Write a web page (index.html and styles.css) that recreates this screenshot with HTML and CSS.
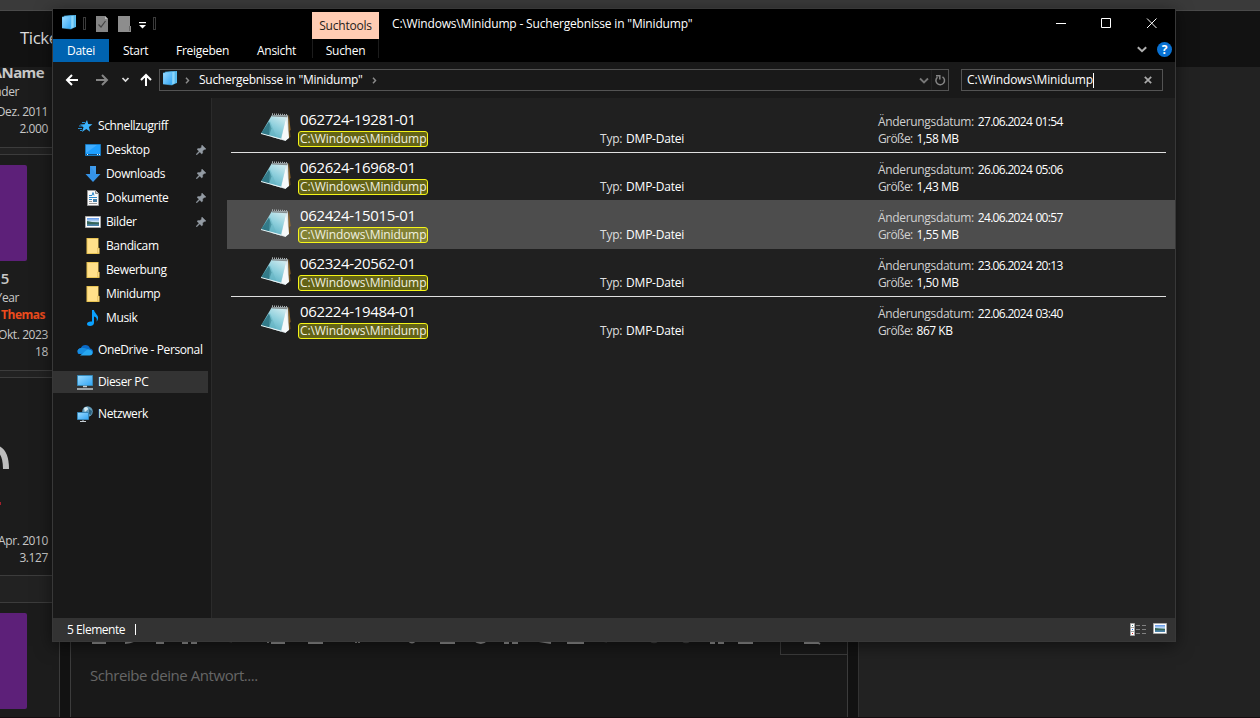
FILE: index.html
```html
<!DOCTYPE html>
<html lang="de">
<head>
<meta charset="utf-8">
<title>C:\Windows\Minidump - Suchergebnisse</title>
<link rel="stylesheet" href="styles.css">
</head>
<body>
<svg class="defs" width="0" height="0">
  <defs>
    <linearGradient id="blue" x1="0" y1="0" x2="1" y2="1"><stop offset="0" stop-color="#9fdcff"/><stop offset="1" stop-color="#2ea4f5"/></linearGradient>
    <linearGradient id="page" x1="0.8" y1="0" x2="0.2" y2="1"><stop offset="0" stop-color="#d2ecf0"/><stop offset=".45" stop-color="#8fd0dd"/><stop offset="1" stop-color="#4ea7bb"/></linearGradient>
    <linearGradient id="sky" x1="0" y1="0" x2="0" y2="1"><stop offset="0" stop-color="#5e96ea"/><stop offset=".45" stop-color="#cde3f5"/><stop offset=".6" stop-color="#3f6f68"/><stop offset="1" stop-color="#4d86b8"/></linearGradient>
    <symbol id="results" viewBox="0 0 14 15"><path d="M4 1l10-1v12l-3 1z" fill="#5bbdf0"/><path d="M2 1l10-.6v12L9 14z" fill="#8bd5fa" stroke="#3ba6e2" stroke-width=".5"/><path d="M0 2l9-.8V14l-9-1z" fill="url(#blue)" stroke="#55baf0" stroke-width=".5"/></symbol>
    <symbol id="pin" viewBox="0 0 10 10"><path d="M6 0l4 4-1.200.5-.6-.1-1.600 1.700.1 2L5.700 9 3.800 7 .6 10 0 9.400 3 6.200 1 4.300l1-.8 2 .1L5.700 2 5.500 1z" fill="#939ba3" stroke="#939ba3" stroke-width=".4"/></symbol>
    <symbol id="folder" viewBox="0 0 13 16"><path d="M0 0h12v10h1v6H0z" fill="#e9c453"/><path d="M1 1h10.500v14H1z" fill="#ffe08a"/><path d="M11 10h1.500v5H11z" fill="#ffe8a6" stroke="#d8ae3d" stroke-width=".5"/></symbol>
    <symbol id="notepad" viewBox="0 0 32 31"><path d="M28.500 4l2 22-2.500 1.500-1-22z" fill="#71501f"/><path d="M29 4l1.500 15-1 1z" fill="#b47a28"/><path d="M12 4l16 .6.800 22L25.500 30 12 26z" fill="#dce6ea"/><path d="M26 7l3 20-3.500 2.500-4-2z" fill="#f6f9fa"/><path d="M12 4l14.500 1L21 28 1 22.500z" fill="url(#page)"/><path d="M9 10.500l2.500 7L9 25l-8-2.500z" fill="#286f7d" opacity=".85"/><path d="M10 10l6 15-7-.5z" fill="#65b3c2" opacity=".5"/><path d="M1 22.500l20 5.500" stroke="#e8f4f6" stroke-width="1"/><path d="M12 3.300l16 .8" stroke="#a8aeb0" stroke-width="2" stroke-dasharray="1 1"/><path d="M12 4.800l15.500.7" stroke="#858e90" stroke-width="1.500"/></symbol>
    <symbol id="picture" viewBox="0 0 16 12"><path d="M.5.500h15v11H.5z" fill="#fff" stroke="#a9a9a9"/><path d="M2 2h12v8H2z" fill="url(#sky)"/><path d="M2 5l5 1 7 1v1H2z" fill="#36665b"/></symbol>
  </defs>
</svg>

<div class="desktop">
  <div class="browserbar"></div>
  <div class="pagehead"><span>Ticke</span></div>
  <div class="columns">
    <div class="posts">
      <section class="post p1"><div class="uname">AName</div><div class="utitle t1">nder</div><div class="meta">Dez. 2011</div><div class="meta">2.000</div></section>
      <section class="post p2"><div class="avatar"></div><div class="five">5</div><div class="utitle">Year</div><div class="themas">Themas</div><div class="meta">Okt. 2023</div><div class="meta">18</div></section>
      <section class="post p3"><svg class="ring" width="10" height="24" viewBox="0 0 10 24"><path d="M-4 2C3 4 6 11 6 23" fill="none" stroke="#bdbdbd" stroke-width="6"/></svg><div class="reddot"></div><div class="meta">Apr. 2010</div><div class="meta">3.127</div></section>
      <section class="post p4"><div class="avatar"></div></section>
    </div>
    <div class="editorwrap">
      <div class="editor">
        <svg class="tools" width="776" height="16" viewBox="0 0 776 16"><g fill="none" stroke="#969696" stroke-width="1.800"><path d="M22 3h14M55 3q5 0 9-2M86 3h8M112 3h6m3 0h6M198 0v3m3 0h14M238 3h15M286 0v3m3-3v3M338 0q4 5 8 0M370 3h15M404 0q7 6 13 0M434 3h5m3 0h6M469 1l12 2M497 3h17M640 3h5m3 0h6M668 3h15M734 3h14m-4-3l6 4"/></g><g fill="none" stroke="#414141" stroke-width="1.500"><path d="M158 1l4 1M533 1l4 1M579 0q5 5 10 0M611 0q5 5 10 0"/></g></svg>
        <div class="preview"></div>
        <p>Schreibe deine Antwort....</p>
      </div>
    </div>
    <div class="aside"></div>
  </div>
</div>

<main class="window">
  <header class="ribbon">
    <div class="quick">
      <svg class="qicon" width="14" height="15"><use href="#results"/></svg><i class="grip g1"></i>
      <svg class="check" width="12" height="16" viewBox="0 0 12 16"><path d="M0 0h9l3 3v13H0z" fill="#858585"/><path d="M9 0v3h3" fill="#bbb"/><path d="M2.500 8.500l2.500 2.500 4.500-6" fill="none" stroke="#444" stroke-width="1.200"/></svg>
      <svg class="newf" width="13" height="16" viewBox="0 0 13 16"><path d="M0 0h12v10h1v6H0z" fill="#8d8d8d"/><path d="M11 10h1v5h-1z" fill="#666"/></svg>
      <svg class="more" width="7" height="7" viewBox="0 0 7 7"><path d="M0 .6h7" stroke="#fff" stroke-width="1.200"/><path d="M0 3h7L3.500 6.500z" fill="#fff"/></svg><i class="grip"></i>
    </div>
    <nav class="tabs"><span class="datei">Datei</span><span class="start">Start</span><span class="frei">Freigeben</span><span class="ans">Ansicht</span></nav>
    <div class="context"><b>Suchtools</b><span>Suchen</span></div>
    <div class="title">C:\Windows\Minidump - Suchergebnisse in "Minidump"</div>
    <div class="controls">
      <svg width="138" height="30" viewBox="0 0 138 30"><g fill="none" stroke="#fff" stroke-width="1"><path d="M19 14.500h10M64.500 9.500h9v9h-9zM110 9.500l9.500 9.500M119.500 9.500L110 19"/></g></svg>
      <div class="help"><svg width="10" height="7" viewBox="0 0 10 7"><path d="M.8 1.200L5 5.200l4.200-4" fill="none" stroke="#b0b0b0" stroke-width="2"/></svg><b>?</b></div>
    </div>
  </header>
  <div class="address">
    <svg width="106" height="36" viewBox="0 0 106 36"><g fill="none" stroke="#fff" stroke-width="2"><path d="M25 18H14m5-5l-5 5 5 5M93 24V13m-5 5l5-5 5 5"/><path d="M43 18h11m-5-5l5 5-5 5" stroke="#858585"/><path d="M69.500 16l3 3 3-3" stroke="#ddd" stroke-width="1.700"/></g></svg>
    <div class="path"><svg width="14" height="15"><use href="#results"/></svg><svg class="chev" width="5" height="7" viewBox="0 0 5 7"><path d="M1 .8l2.500 2.700L1 6.200" fill="none" stroke="#8a8a8a" stroke-width="1.500"/></svg><span>Suchergebnisse in "Minidump"</span><svg class="chev2" width="5" height="7" viewBox="0 0 5 7"><path d="M1 .8l2.500 2.700L1 6.200" fill="none" stroke="#8a8a8a" stroke-width="1.500"/></svg>
      <svg class="reload" width="30" height="20" viewBox="0 0 30 20"><path d="M2 8.500l4 4 4-4" fill="none" stroke="#777" stroke-width="1.800"/><path d="M13.500 0v20" stroke="#222"/><path d="M24.500 6.800a4.300 4.300 0 1 1-5 .3M18 5.700h3.800v3.800" fill="none" stroke="#858585" stroke-width="1.500"/></svg>
    </div>
    <div class="search"><span>C:\Windows\Minidump</span><i></i><svg width="8" height="8" viewBox="0 0 8 8"><path d="M.8.800l6.400 6.400M7.200.800L.8 7.200" stroke="#aaa" stroke-width="1.700"/></svg></div>
  </div>
  <div class="body">
    <nav class="side">
      <div class="item root"><svg width="16" height="16" viewBox="0 0 16 16"><path d="M10 2l1.200 4 4.300.2-3.600 2.700 1.200 4.800-3.800-2.700L5 14l1.500-4.700L3 6.500l4.600-.2z" fill="#3db3fc"/><path d="M5 4.500h3M2 8h4M1 10.500h4M3 12.500h2" stroke="#268dd0" stroke-width="1"/></svg><span>Schnellzugriff</span></div>
      <div class="item"><svg width="16" height="16" viewBox="0 0 16 16"><path d="M.5 2.500h15v11H.5z" fill="#1e9fff" stroke="#1879bf"/><path d="M1 3h11L1 11z" fill="#40adff"/><path d="M1 12.500h14" stroke="#154d79"/><path d="M2 12.500h1m9 0h1m1 0h1" stroke="#eee"/></svg><span>Desktop</span><svg class="pin" width="10" height="10"><use href="#pin"/></svg></div>
      <div class="item"><svg width="16" height="16" viewBox="0 0 16 16"><path d="M5 0h6v8h4.500L8 16 .5 8H5z" fill="#3593e8"/><path d="M5 0h6v8" fill="#4ba5f0" opacity=".5"/></svg><span>Downloads</span><svg class="pin" width="10" height="10"><use href="#pin"/></svg></div>
      <div class="item"><svg width="16" height="16" viewBox="0 0 16 16"><path d="M2.500.500h8l3 3v12h-11z" fill="#fafafa" stroke="#999"/><path d="M10.500.500v3h3" fill="#ccc" stroke="#888"/><path d="M4 5.500h3l1-3 1 3M4 7.500h8M4 9.500h3" stroke="#2987ca" fill="none"/><path d="M4 11.500h3m-3 2h8" stroke="#999"/><path d="M8 9h4v3H8z" fill="#477fa6"/></svg><span>Dokumente</span><svg class="pin" width="10" height="10"><use href="#pin"/></svg></div>
      <div class="item"><svg width="16" height="12"><use href="#picture"/></svg><span>Bilder</span><svg class="pin" width="10" height="10"><use href="#pin"/></svg></div>
      <div class="item"><svg width="16" height="16"><use href="#folder"/></svg><span>Bandicam</span></div>
      <div class="item"><svg width="16" height="16"><use href="#folder"/></svg><span>Bewerbung</span></div>
      <div class="item"><svg width="16" height="16"><use href="#folder"/></svg><span>Minidump</span></div>
      <div class="item"><svg width="16" height="16" viewBox="0 0 16 16"><path d="M7 0h2c0 3 5 5 4 9-.5 2-1.500 2.500-1.500 2.500 1-3-.5-4.500-2.500-5V13c0 2-2 3-4 3s-3-1-3-2.300S4 11 7 11.500z" fill="#0aa1ff"/></svg><span>Musik</span></div>
      <div class="item root gap"><svg width="16" height="16" viewBox="0 0 16 16"><path d="M1 12C-.5 8 2 6 4 6c1-4 8-4 9 .5 3 .5 4 3.500 2 5.500z" fill="#0a69c6"/><path d="M4 6c3-1 6 2 9 .5L9 10 3 12C-.5 11-.5 7 4 6z" fill="#178de0"/><path d="M3 13.500l6-5c2-2 6-1 6.500 2 .3 2-1 3-3 3z" fill="#27a8f1"/></svg><span>OneDrive - Personal</span></div>
      <div class="item root gap active"><svg width="16" height="16" viewBox="0 0 16 16"><path d="M.5 1.500h15v10H.5z" fill="url(#blue)" stroke="#3689b8"/><path d="M6 12.500h4M0 15h16" stroke="#c2cbd1" stroke-width="1.500"/></svg><span>Dieser PC</span></div>
      <div class="item root gap"><svg width="16" height="16" viewBox="0 0 16 16"><circle cx="10.500" cy="5.500" r="5.300" fill="#639bb9"/><path d="M7 2c2-2 4-1 4 1s-3 1-3 4z" fill="#d6ebf4"/><path d="M12 3l3 2-1 4-2-1z" fill="#2d617f"/><path d="M.5 6.500h11v7H.5z" fill="url(#blue)" stroke="#3585b7"/><path d="M3 15.500h6M6 14v2" stroke="#c7d0d6"/></svg><span>Netzwerk</span></div>
    </nav>
    <div class="files">
      <div class="row"><svg class="nicon" width="32" height="31"><use href="#notepad"/></svg><div class="name"><strong>062724-19281-01</strong><mark>C:\Windows\Minidump</mark></div><div class="type">Typ: <b>DMP-Datei</b></div><div class="info"><div><label>Änderungsdatum:</label><b class="date">27.06.2024 01:54</b></div><div><label class="size">Größe:</label><b class="bytes">1,58 MB</b></div></div></div>
      <div class="row line"><svg class="nicon" width="32" height="31"><use href="#notepad"/></svg><div class="name"><strong>062624-16968-01</strong><mark>C:\Windows\Minidump</mark></div><div class="type">Typ: <b>DMP-Datei</b></div><div class="info"><div><label>Änderungsdatum:</label><b class="date">26.06.2024 05:06</b></div><div><label class="size">Größe:</label><b class="bytes">1,43 MB</b></div></div></div>
      <div class="row selected"><svg class="nicon" width="32" height="31"><use href="#notepad"/></svg><div class="name"><strong>062424-15015-01</strong><mark>C:\Windows\Minidump</mark></div><div class="type">Typ: <b>DMP-Datei</b></div><div class="info"><div><label>Änderungsdatum:</label><b class="date">24.06.2024 00:57</b></div><div><label class="size">Größe:</label><b class="bytes">1,55 MB</b></div></div></div>
      <div class="row"><svg class="nicon" width="32" height="31"><use href="#notepad"/></svg><div class="name"><strong>062324-20562-01</strong><mark>C:\Windows\Minidump</mark></div><div class="type">Typ: <b>DMP-Datei</b></div><div class="info"><div><label>Änderungsdatum:</label><b class="date">23.06.2024 20:13</b></div><div><label class="size">Größe:</label><b class="bytes">1,50 MB</b></div></div></div>
      <div class="row line"><svg class="nicon" width="32" height="31"><use href="#notepad"/></svg><div class="name"><strong>062224-19484-01</strong><mark>C:\Windows\Minidump</mark></div><div class="type">Typ: <b>DMP-Datei</b></div><div class="info"><div><label>Änderungsdatum:</label><b class="date">22.06.2024 03:40</b></div><div><label class="size">Größe:</label><b class="bytes">867 KB</b></div></div></div>
    </div>
  </div>
  <footer class="status"><span>5 Elemente</span><i></i>
    <svg class="details" width="16" height="13" viewBox="0 0 16 13"><path d="M.5.500h4v4h-4zM.5 4.500h4v4h-4zM.5 8.500h4v4h-4z" fill="#fff" stroke="#a7a7a7"/><path d="M2 2h1v1H2z" fill="#3a7777"/><path d="M2 6h1v1H2z" fill="#1874ef"/><path d="M2 10h1v1H2z" fill="#d11d1d"/><path d="M6 2.500h4m2 0h4M6 6.500h4m2 0h4M6 10.500h4m2 0h4" stroke="#818181"/></svg>
    <svg class="large" width="14" height="11" viewBox="0 0 14 11"><path d="M.5.500h13v10H.5z" fill="#fff" stroke="#a9a9a9"/><path d="M2 2h10v7H2z" fill="url(#sky)"/><path d="M2 5l4 .5 6 .5v1H2z" fill="#36665b"/></svg>
  </footer>
</main>
</body>
</html>
```
FILE: styles.css
```css
* { box-sizing: border-box; }
body { margin: 0; width: 1260px; height: 718px; overflow: hidden; position: relative; background: #222; color: #fff; font: 12px/17px "Open Sans", "Noto Sans", sans-serif; letter-spacing: -.28px; white-space: nowrap; }
svg { display: block; flex: none; }
b, strong { font-weight: 400; }
.defs { position: absolute; }

/* forum page behind the window */
.desktop { display: flex; flex-direction: column; height: 718px; border-bottom: 1px solid #150c0f; }
.browserbar { height: 11px; flex: none; background: #3a3a3a; border-bottom: 1px solid #4a4a4a; }
.pagehead { height: 56px; flex: none; background: #121212; padding: 15px 0 0 20px; font-size: 17px; line-height: 24px; color: #ddd; letter-spacing: -.5px; }
.columns { flex: 1; display: flex; min-height: 0; }
.posts { width: 60px; display: flex; flex-direction: column; background: #222; overflow: hidden; }
.post { background: #1c1c1c; border: solid #3c3c3c; border-width: 1px 1px 1px 0; flex: none; overflow: hidden; }
.post > div { display: flex; justify-content: flex-end; width: 48px; color: #c8c8c8; letter-spacing: -.4px; }
.p1 { height: 81px; border-top: 0; }
.post .uname { width: 44px; font-size: 15px; font-weight: 700; line-height: 11px; letter-spacing: -.6px; margin-bottom: 5px; }
.post .utitle { width: 19px; line-height: 17px; margin-bottom: 2px; }
.post .t1 { margin-top: 1px; margin-bottom: 3px; }
.p2 { height: 217px; margin-top: 6px; padding-top: 10px; }
.post .avatar { width: 27px; height: 96px; background: #5d2079; border-radius: 0 2px 2px 0; }
.post .five { width: 9px; font-size: 15px; font-weight: 600; line-height: 20px; margin-top: 7px; }
.post .five + .utitle { margin: 1px 0 0; }
.post .themas { width: 45px; color: #ec4b1d; font-weight: 700; letter-spacing: -.5px; margin-bottom: 3px; }
.p3 { height: 199px; margin-top: 6px; padding-top: 68px; }
.post .reddot { width: 1px; height: 3px; background: #a31f2c; margin: 32px 0 27px; }
.p4 { height: 130px; margin-top: 26px; padding-top: 10px; }
.editorwrap { width: 798px; background: #121212; padding: 0 10px; }
.editor { height: 100%; background: #191919; border: solid #3c3c3c; border-width: 0 1px; padding-top: 573px; position: relative; }
.tools { overflow: hidden; margin-left: -1px; }
.preview { position: absolute; right: 0; top: 560px; width: 67px; height: 28px; border: solid #3c3c3c; border-width: 0 0 1px 1px; }
.editor p { margin: 8px 0 0 19px; line-height: 22px; font-size: 15px; color: #666; letter-spacing: -.44px; }
.aside { flex: 1; border-left: 1px solid #333; }

/* explorer window */
.window { position: absolute; left: 52px; top: 8px; width: 1124px; height: 634px; border: 1px solid #383838; background: #202020; box-shadow: 0 4px 16px rgba(0,0,0,.5); display: flex; flex-direction: column; }
.ribbon { height: 53px; flex: none; background: #000; display: grid; grid-template-columns: 259px 67px 1fr 138px; grid-template-rows: 30px 23px; }
.quick { display: flex; align-items: center; padding-left: 9px; }
.qicon { margin-top: -4px; }
.grip { width: 3px; height: 13px; border: 1px solid #3b3b3b; margin: 0 0 1px 7px; }
.check { margin-left: 10px; }
.newf { margin-left: 10px; }
.more { margin-left: 8px; margin-top: 3px; }
.tabs { grid-column: 1; grid-row: 2; display: flex; align-items: center; line-height: 23px; }
.datei { width: 56px; text-align: center; background: #0063b1; }
.start { margin-left: 14px; width: 53px; }
.frei { width: 81px; }
.context { grid-column: 2; grid-row: 1 / 3; padding-top: 3px; text-align: center; }
.context b { display: block; height: 27px; line-height: 28px; background: #ffccb3; color: #262019; letter-spacing: -.2px; }
.context span { display: block; height: 19px; line-height: 23px; border: solid #1c1c1c; border-width: 0 1px; }
.title { padding: 6px 0 0 13px; letter-spacing: -.18px; }
.controls { grid-column: 4; grid-row: 1 / 3; }
.help { display: flex; align-items: center; padding: 3px 0 0 100px; gap: 10px; }
.help b { width: 15px; height: 15px; border-radius: 50%; background: #0871d3; font: 700 12px/15px "Open Sans", sans-serif; text-align: center; }
.address { height: 36px; flex: none; display: flex; align-items: center; background: #191919; }
.path, .search { height: 22px; border: 1px solid #535353; display: flex; align-items: center; }
.path { width: 790px; padding-left: 3px; }
.path > svg:first-child { margin-top: -4px; }
.chev { margin-left: 8px; }
.path span { margin: -1px 0 0 9px; }
.chev2 { margin-left: 9px; }
.reload { margin-left: auto; }
.search { width: 202px; margin-left: 12px; padding-left: 5px; letter-spacing: -.1px; }
.search span { margin-top: -1px; }
.search i { width: 1px; height: 15px; background: #fff; }
.search svg { margin-left: auto; margin-right: 10px; }
.body { flex: 1; display: flex; min-height: 0; }
.side { width: 159px; background: #191919; border-right: 1px solid #2b2b2b; padding-top: 16px; }
.item { width: 155px; height: 24px; display: flex; align-items: center; padding-left: 32px; gap: 5px; letter-spacing: -.38px; }
.item span { margin-top: -1px; }
.item.root { padding-left: 24px; }
.item.gap { height: 22px; margin-top: 10px; }
.item.gap:nth-child(10) { margin-top: 9px; }
.active { background: #333; }
.pin { margin: 0 2px 0 auto; }
.files { flex: 1; padding: 7px 0 0 15px; }
.row { height: 48px; display: flex; position: relative; padding-left: 33px; }
.line::before { content: ""; position: absolute; left: 4px; right: 9px; top: -1px; height: 1px; background: #e0e0e0; }
.selected { background: #4d4d4d; height: 49px; margin: -1px 0 0; padding-top: 1px; }
.nicon { margin-top: 6px; }
.name { width: 308px; padding: 4px 0 0 6px; }
strong { display: block; margin-left: 2px; font-size: 15px; line-height: 20px; letter-spacing: -.36px; }
mark { display: block; width: 130px; height: 16px; margin-top: 2px; padding-left: 1px; border: 1px solid #f5f518; border-radius: 3px; background: rgba(255,255,0,.3); color: #f0f0e0; line-height: 14px; letter-spacing: -.08px; }
.type { width: 278px; padding-top: 25px; color: #dedede; word-spacing: 1px; letter-spacing: -.23px; }
.type b, .info b { color: #fff; }
.info { padding-top: 8px; color: #d0d0d0; letter-spacing: -.33px; }
.info b { margin-left: 4px; }
.info .date { letter-spacing: -.7px; word-spacing: 1px; }
.info .size { letter-spacing: -.6px; }
.info .bytes { letter-spacing: -.5px; }
.status { height: 23px; flex: none; display: flex; align-items: center; background: #333; padding-left: 14px; letter-spacing: -.45px; }
.status i { width: 1px; height: 11px; background: #fff; margin-left: 10px; }
.details { margin-left: auto; margin-top: -1px; }
.large { margin: -2px 8px 0 7px; }
```
